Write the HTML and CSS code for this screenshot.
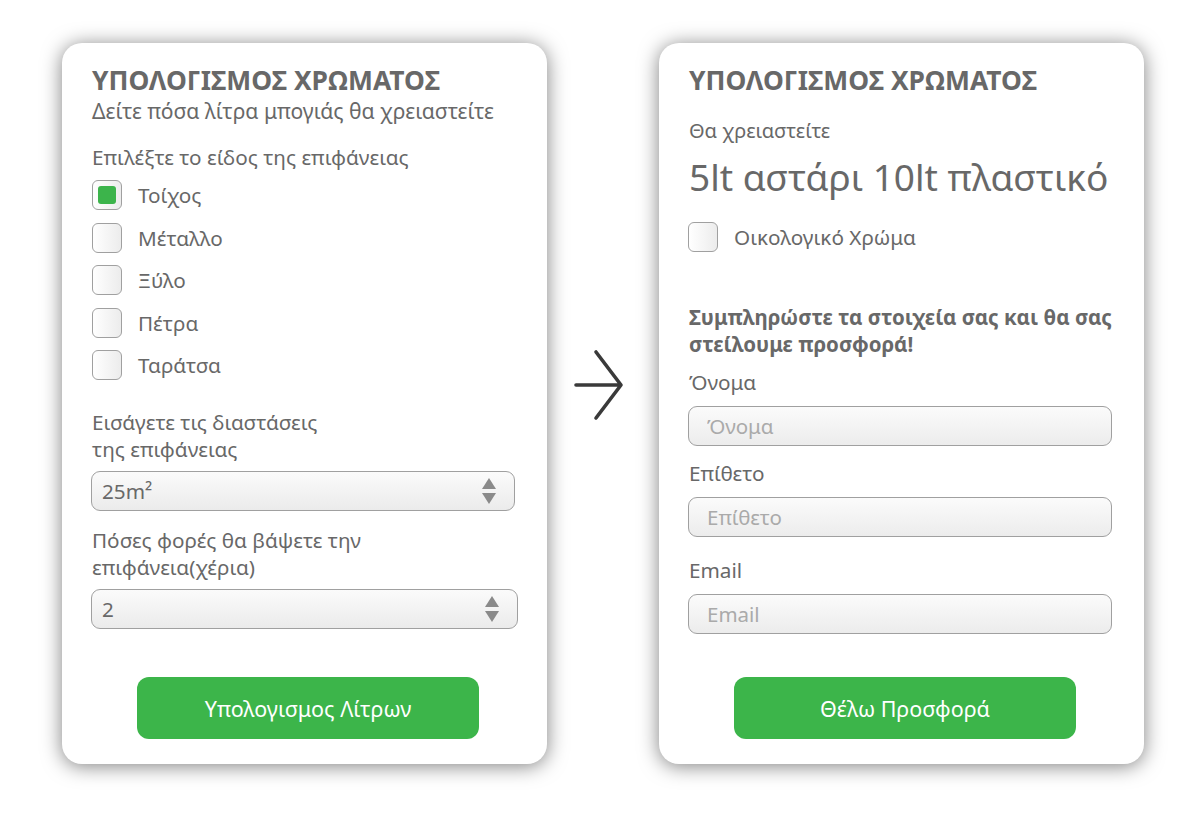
FILE: index.html
```html
<!DOCTYPE html>
<html lang="el">
<head>
  <meta charset="UTF-8" />
  <meta name="viewport" content="width=device-width, initial-scale=1" />
  <title>Υπολογισμός Χρώματος</title>
  <link rel="stylesheet" href="styles.css">
</head>
<body>
  <div class="page">
    <div class="card">
      <h2 class="title">ΥΠΟΛΟΓΙΣΜΟΣ ΧΡΩΜΑΤΟΣ</h2>
      <p class="subtitle">Δείτε πόσα λίτρα μπογιάς θα χρειαστείτε</p>
      <p class="label first-label">Επιλέξτε το είδος της επιφάνειας</p>
      <ul class="options">
        <li><span class="box checked"></span>Τοίχος</li>
        <li><span class="box"></span>Μέταλλο</li>
        <li><span class="box"></span>Ξύλο</li>
        <li><span class="box"></span>Πέτρα</li>
        <li><span class="box"></span>Ταράτσα</li>
      </ul>
      <p class="label dims-label">Εισάγετε τις διαστάσεις<br>της επιφάνειας</p>
      <div class="select">
        <span>25m²</span>
        <svg width="16" height="28" viewBox="0 0 16 28"><path d="M8 1 L15 12 L1 12 Z" fill="#8a8a8a"/><path d="M8 27 L15 16 L1 16 Z" fill="#8a8a8a"/></svg>
      </div>
      <p class="label coats-label">Πόσες φορές θα βάψετε την<br>επιφάνεια(χέρια)</p>
      <div class="select select-wide">
        <span>2</span>
        <svg width="16" height="28" viewBox="0 0 16 28"><path d="M8 1 L15 12 L1 12 Z" fill="#8a8a8a"/><path d="M8 27 L15 16 L1 16 Z" fill="#8a8a8a"/></svg>
      </div>
      <button class="btn">Υπολογισμος Λίτρων</button>
    </div>

    <div class="arrow">
      <svg width="56" height="76" viewBox="0 0 56 76"><path d="M4 37 H49 M24 4 L49 37 L24 70" fill="none" stroke="#3a3a3a" stroke-width="3.6" stroke-linecap="round" stroke-linejoin="round"/></svg>
    </div>

    <div class="card">
      <h2 class="title">ΥΠΟΛΟΓΙΣΜΟΣ ΧΡΩΜΑΤΟΣ</h2>
      <p class="need">Θα χρειαστείτε</p>
      <p class="result">5lt αστάρι 10lt πλαστικό</p>
      <div class="eco"><span class="box"></span>Οικολογικό Χρώμα</div>
      <p class="offer">Συμπληρώστε τα στοιχεία σας και θα σας<br>στείλουμε προσφορά!</p>
      <label class="field-label name-label">Όνομα</label>
      <input class="field" type="text" placeholder="Όνομα" />
      <label class="field-label">Επίθετο</label>
      <input class="field" type="text" placeholder="Επίθετο" />
      <label class="field-label email-label">Email</label>
      <input class="field" type="text" placeholder="Email" />
      <button class="btn">Θέλω Προσφορά</button>
    </div>
  </div>
</body>
</html>
```

FILE: styles.css
```css
body { margin: 0; background: #fff; font-family: "Noto Sans", "Open Sans", sans-serif; color: #686868; }
p, h2, ul { margin: 0; }

.page { display: flex; align-items: flex-start; padding: 43px 0 50px 62px; }
.card { width: 485px; height: 721px; box-sizing: border-box; padding: 22px 30px 25px; background: #fff; border-radius: 20px; box-shadow: 0 2px 20px rgba(0, 0, 0, 0.5); display: flex; flex-direction: column; }
.arrow { width: 112px; display: flex; justify-content: center; margin-top: 305px; padding-right: 6px; box-sizing: border-box; }

.title { font-size: 26.4px; line-height: 30px; font-weight: bold; color: #686868; }
.subtitle { font-size: 21.1px; line-height: 28px; margin-top: 2px; }
.label { font-size: 20.7px; line-height: 27px; }
.first-label { margin-top: 19px; }
.dims-label { margin-top: 29px; }
.coats-label { margin-top: 16px; }

.options { list-style: none; padding: 0; margin-top: 9px; display: flex; flex-direction: column; gap: 12.5px; }
.options li { display: flex; align-items: center; height: 30px; font-size: 20.7px; }

.box { width: 30px; height: 30px; box-sizing: border-box; border: 1.5px solid #a0a0a0; border-radius: 6px; background: linear-gradient(to right, #fff, #ececec); margin-right: 16px; flex: none; position: relative; }
.box.checked::after { content: ""; position: absolute; left: 4.5px; top: 4.5px; width: 18px; height: 18px; border-radius: 3px; background: #3cb44b; }

.select { display: flex; align-items: center; justify-content: space-between; height: 40px; box-sizing: border-box; margin-top: 8px; width: 424px; margin-left: -1px; padding: 0 17px 0 10px; border: 1.5px solid #a0a0a0; border-radius: 9px; background: linear-gradient(#fbfbfb, #ebebeb); font-size: 20.7px; color: #686868; }
.select-wide { width: 427px; }

.btn { margin-top: auto; margin-left: 45px; width: 342px; height: 62px; border: none; border-radius: 12px; background: #3cb54a; color: #fff; font-family: "Noto Sans", "Open Sans", sans-serif; font-size: 21.5px; cursor: pointer; }

.need { font-size: 20px; line-height: 26px; margin-top: 23px; }
.result { font-size: 37px; line-height: 46px; margin-top: 10px; }
.eco { display: flex; align-items: center; height: 30px; margin-top: 22px; margin-left: -1px; font-size: 20.7px; }
.offer { font-size: 20.5px; line-height: 27px; font-weight: bold; margin-top: 52px; }

.field-label { font-size: 20.7px; line-height: 27px; margin-top: 14px; }
.name-label { margin-top: 11px; }
.email-label { margin-top: 19.5px; }
.field { display: block; width: 424px; height: 40px; box-sizing: border-box; margin: 10px 0 0 -1px; padding: 0 18px; border: 1.5px solid #a0a0a0; border-radius: 9px; background: linear-gradient(#fbfbfb, #ececec); font-family: "Noto Sans", "Open Sans", sans-serif; font-size: 20.5px; color: #686868; }
.field::placeholder { color: #aaa; }
```
